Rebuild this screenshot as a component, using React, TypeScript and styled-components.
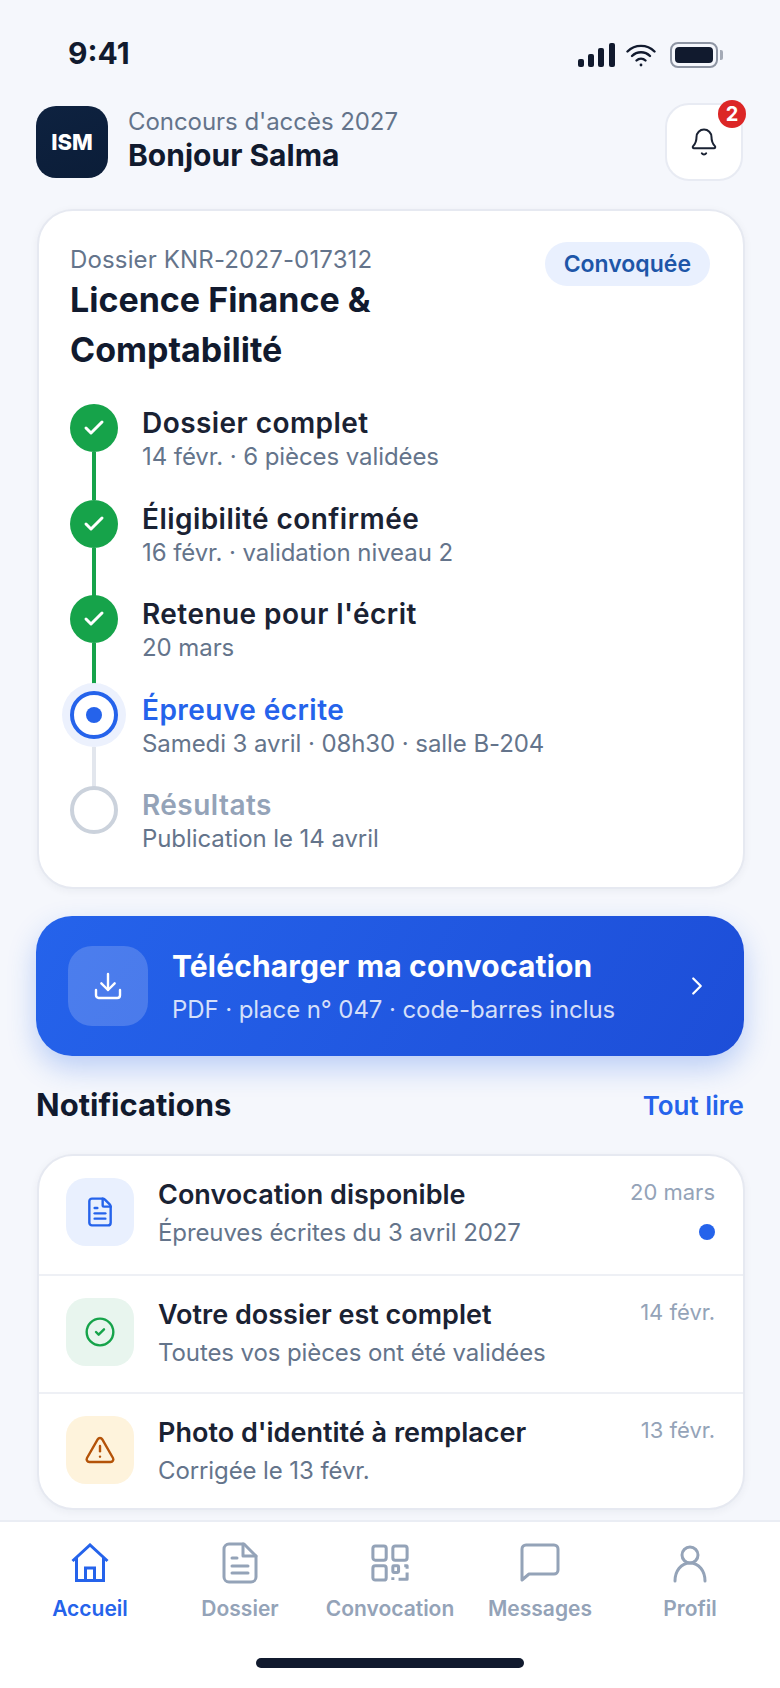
import styled, { createGlobalStyle } from "styled-components"
import { Bell, Check, ChevronRight, CircleCheck, Download, FileText, TriangleAlert } from "lucide-react"

const GlobalStyle = createGlobalStyle`
    * { box-sizing: border-box; }
    html, body { margin: 0; padding: 0; background: #f5f7fc; }
    body { font-family: Inter, "Liberation Sans", sans-serif; color: #111a2e; }
`

type StepState = "done" | "current" | "todo"

interface Step {
    title: string
    detail: string
    state: StepState
}

const steps: Step[] = [
    { title: "Dossier complet", detail: "14 févr. · 6 pièces validées", state: "done" },
    { title: "Éligibilité confirmée", detail: "16 févr. · validation niveau 2", state: "done" },
    { title: "Retenue pour l'écrit", detail: "20 mars", state: "done" },
    { title: "Épreuve écrite", detail: "Samedi 3 avril · 08h30 · salle B-204", state: "current" },
    { title: "Résultats", detail: "Publication le 14 avril", state: "todo" },
]

const tabs = [
    { label: "Accueil", icon: <HomeIcon />, active: true },
    { label: "Dossier", icon: <DocIcon />, active: false },
    { label: "Convocation", icon: <QrIcon />, active: false },
    { label: "Messages", icon: <ChatIcon />, active: false },
    { label: "Profil", icon: <UserIcon />, active: false },
]

function HomeIcon() {
    return (
        <svg width="40" height="40" viewBox="0 0 40 40" fill="none" stroke="currentColor" strokeWidth="3">
            <path d="M2.500 18 20 2l17.500 16" />
            <path d="M6.500 15v22.500h27V15" />
            <path d="M15.500 37.500V25h9v12.500" />
        </svg>
    )
}

function DocIcon() {
    return (
        <svg width="36" height="42" viewBox="0 0 36 42" fill="none" stroke="currentColor" strokeWidth="3" strokeLinecap="round" strokeLinejoin="round">
            <path d="M22 2H7a5 5 0 0 0-5 5v28a5 5 0 0 0 5 5h22a5 5 0 0 0 5-5V14z" />
            <path d="M21 2v12h13" />
            <path d="M10 16h5M10 24h16M10 31h16" />
        </svg>
    )
}

function QrIcon() {
    return (
        <svg width="38" height="38" viewBox="0 0 40 40" fill="none" stroke="currentColor" strokeWidth="3.200" strokeLinejoin="round">
            <rect x="2" y="2" width="14" height="15" rx="2.500" />
            <rect x="23" y="2" width="15" height="15" rx="2.500" />
            <rect x="2" y="23" width="14" height="15" rx="2.500" />
            <rect x="23" y="23" width="6" height="7" rx="1" />
            <path d="M35 23h3v3M38 30v7h-9M23 35v3" />
        </svg>
    )
}

function ChatIcon() {
    return (
        <svg width="40" height="40" viewBox="0 0 40 40" fill="none" stroke="currentColor" strokeWidth="3" strokeLinejoin="round">
            <path d="M2 37V6a4 4 0 0 1 4-4h28a4 4 0 0 1 4 4v21a4 4 0 0 1-4 4H9z" />
        </svg>
    )
}

function UserIcon() {
    return (
        <svg width="34" height="40" viewBox="0 0 34 40" fill="none" stroke="currentColor" strokeWidth="3" strokeLinecap="round">
            <circle cx="17" cy="12" r="8" />
            <path d="M2 38c0-10 6-18 15-18s15 8 15 18" />
        </svg>
    )
}

function StatusIcons() {
    return (
        <StatusRight>
            <svg width="38" height="24" viewBox="0 0 38 24" fill="#111a2e">
                <rect x="0" y="16" width="6" height="8" rx="2" />
                <rect x="10" y="11" width="6" height="13" rx="2" />
                <rect x="20" y="5" width="6" height="19" rx="2" />
                <rect x="31" y="0" width="6" height="24" rx="2" />
            </svg>
            <svg width="30" height="24" viewBox="0 0 30 24" fill="none" stroke="#111a2e" strokeWidth="2.400" strokeLinecap="round">
                <path d="M1.500 8.500C9 1 21 1 28.500 8.500" />
                <path d="M6 13c5-5 13-5 18 0" />
                <path d="M10.500 17.500c2.500-2.500 6.500-2.500 9 0" />
                <circle cx="15" cy="22" r="1.400" fill="#111a2e" stroke="none" />
            </svg>
            <Battery>
                <BatteryFill />
            </Battery>
            <BatteryCap />
        </StatusRight>
    )
}

export default function App() {
    return (
        <>
            <GlobalStyle />
            <Screen>
                <StatusBar>
                    <Time>9:41</Time>
                    <StatusIcons />
                </StatusBar>

                <Content>
                    <Header>
                        <Logo>ISM</Logo>
                        <Greeting>
                            <Exam>Concours d'accès 2027</Exam>
                            <Hello>Bonjour Salma</Hello>
                        </Greeting>
                        <BellButton>
                            <Bell size={30} strokeWidth={1.6} />
                            <Badge>2</Badge>
                        </BellButton>
                    </Header>

                    <DossierCard>
                        <DossierTop>
                            <div>
                                <DossierRef>Dossier KNR-2027-017312</DossierRef>
                                <DossierTitle>Licence Finance &<br />Comptabilité</DossierTitle>
                            </div>
                            <StatusPill>Convoquée</StatusPill>
                        </DossierTop>
                        <Timeline>
                            {steps.map((step, index) => (
                                <StepRow key={step.title}>
                                    <StepMarker $state={step.state}>
                                        {step.state === "done" && <Check size={24} strokeWidth={3} color="#fff" />}
                                        {step.state === "current" && <CurrentDot />}
                                    </StepMarker>
                                    {index < steps.length - 1 && <StepLine $state={step.state} />}
                                    <StepText>
                                        <StepTitle $state={step.state}>{step.title}</StepTitle>
                                        <StepDetail>{step.detail}</StepDetail>
                                    </StepText>
                                </StepRow>
                            ))}
                        </Timeline>
                    </DossierCard>

                    <DownloadButton>
                        <DownloadIcon>
                            <Download size={32} strokeWidth={1.8} />
                        </DownloadIcon>
                        <DownloadText>
                            <DownloadTitle>Télécharger ma convocation</DownloadTitle>
                            <DownloadSub>PDF · place n° 047 · code-barres inclus</DownloadSub>
                        </DownloadText>
                        <ChevronRight size={30} strokeWidth={1.8} />
                    </DownloadButton>

                    <SectionHead>
                        <SectionTitle>Notifications</SectionTitle>
                        <ReadAll>Tout lire</ReadAll>
                    </SectionHead>

                    <NotifCard>
                        <NotifRow $height={120}>
                            <NotifIcon $bg="#e9f0fe" $color="#2563eb"><FileText size={32} strokeWidth={1.8} /></NotifIcon>
                            <NotifText>
                                <NotifTitle>Convocation disponible</NotifTitle>
                                <NotifSub>Épreuves écrites du 3 avril 2027</NotifSub>
                            </NotifText>
                            <NotifMeta>
                                <NotifDate>20 mars</NotifDate>
                                <UnreadDot />
                            </NotifMeta>
                        </NotifRow>
                        <NotifRow $height={118}>
                            <NotifIcon $bg="#e8f5ee" $color="#16a34a"><CircleCheck size={32} strokeWidth={1.8} /></NotifIcon>
                            <NotifText>
                                <NotifTitle>Votre dossier est complet</NotifTitle>
                                <NotifSub>Toutes vos pièces ont été validées</NotifSub>
                            </NotifText>
                            <NotifMeta>
                                <NotifDate>14 févr.</NotifDate>
                            </NotifMeta>
                        </NotifRow>
                        <NotifRow $height={114}>
                            <NotifIcon $bg="#fef3dc" $color="#b45309"><TriangleAlert size={32} strokeWidth={1.8} /></NotifIcon>
                            <NotifText>
                                <NotifTitle>Photo d'identité à remplacer</NotifTitle>
                                <NotifSub>Corrigée le 13 févr.</NotifSub>
                            </NotifText>
                            <NotifMeta>
                                <NotifDate>13 févr.</NotifDate>
                            </NotifMeta>
                        </NotifRow>
                    </NotifCard>
                </Content>

                <TabBar>
                    <Tabs>
                        {tabs.map(tab => (
                            <Tab key={tab.label} $active={tab.active}>
                                <TabIcon>{tab.icon}</TabIcon>
                                <TabLabel>{tab.label}</TabLabel>
                            </Tab>
                        ))}
                    </Tabs>
                    <HomeIndicator />
                </TabBar>
            </Screen>
        </>
    )
}

const Screen = styled.div`
    width: 780px;
    height: 1688px;
    display: flex;
    flex-direction: column;
    overflow: hidden;
    background: #f5f7fc;
`
const StatusBar = styled.div`
    height: 103px;
    flex: none;
    display: flex;
    justify-content: space-between;
    align-items: flex-start;
    padding: 34px 57px 0 68px;
`
const Time = styled.div`
    margin-top: 1px;
    font-size: 30px;
    font-weight: 700;
    line-height: 36px;
    color: #111a2e;
`
const StatusRight = styled.div`
    display: flex;
    align-items: center;
    gap: 10px;
    padding-top: 8px;
`
const Battery = styled.div`
    width: 48px;
    height: 26px;
    margin-left: 4px;
    padding: 3px;
    border: 2px solid #8e95a3;
    border-radius: 8px;
`
const BatteryFill = styled.div`
    width: 100%;
    height: 100%;
    background: #111a2e;
    border-radius: 4px;
`
const BatteryCap = styled.div`
    width: 3px;
    height: 10px;
    margin-left: -8px;
    background: #a4aab6;
    border-radius: 0 2px 2px 0;
`
const Content = styled.div`
    padding: 0 36px;
    display: flex;
    flex-direction: column;
`
const Header = styled.div`
    height: 78px;
    display: flex;
    align-items: center;
`
const Logo = styled.div`
    width: 72px;
    height: 72px;
    border-radius: 20px;
    background: linear-gradient(160deg, #0e2240, #0b1d38);
    color: #fff;
    font-size: 22px;
    font-weight: 800;
    display: flex;
    align-items: center;
    justify-content: center;
`
const Greeting = styled.div`
    margin: 0 0 4px 20px;
    flex: 1;
`
const Exam = styled.div`
    font-size: 24px;
    line-height: 32px;
    letter-spacing: -0.05px;
    color: #64748b;
`
const Hello = styled.div`
    margin-top: -2px;
    font-size: 30px;
    font-weight: 700;
    line-height: 38px;
    color: #111a2e;
`
const BellButton = styled.div`
    position: relative;
    width: 78px;
    height: 78px;
    margin-right: 1px;
    border-radius: 24px;
    background: #fff;
    border: 2px solid #e8ebf3;
    color: #1a2233;
    display: flex;
    align-items: center;
    justify-content: center;
`
const Badge = styled.div`
    position: absolute;
    top: -5px;
    right: -5px;
    width: 28px;
    height: 28px;
    border-radius: 50%;
    background: #dc2626;
    color: #fff;
    font-size: 20px;
    font-weight: 700;
    display: flex;
    align-items: center;
    justify-content: center;
`
const DossierCard = styled.div`
    margin: 28px -1px 0 1px;
    height: 680px;
    background: #fff;
    border: 2px solid #e6e9f1;
    border-radius: 36px;
    padding: 34px 33px 0 31px;
    box-shadow: 0 2px 8px rgba(15, 30, 60, 0.05);
`
const DossierTop = styled.div`
    display: flex;
    justify-content: space-between;
    align-items: flex-start;
`
const DossierRef = styled.div`
    font-size: 24px;
    line-height: 30px;
    letter-spacing: 0.15px;
    color: #64748b;
`
const DossierTitle = styled.div`
    font-size: 34px;
    line-height: 50px;
    font-weight: 700;
    color: #111a2e;
`
const StatusPill = styled.div`
    margin-top: -3px;
    padding: 0 19px;
    height: 44px;
    display: flex;
    align-items: center;
    border-radius: 22px;
    background: #e9f0fe;
    color: #1e56a8;
    font-size: 23px;
    font-weight: 600;
`
const Timeline = styled.div`
    margin-top: 29px;
`
const StepRow = styled.div`
    position: relative;
    height: 95.500px;
    display: flex;
    align-items: flex-start;
`
const StepMarker = styled.div<{ $state: StepState }>`
    width: 48px;
    height: 48px;
    flex: none;
    border-radius: 50%;
    display: flex;
    align-items: center;
    justify-content: center;
    background: ${p => (p.$state === "done" ? "#16a34a" : "#fff")};
    border: ${p => (p.$state === "current" ? "4px solid #2563eb" : p.$state === "todo" ? "4px solid #cbd2dc" : "none")};
    box-shadow: ${p => (p.$state === "current" ? "0 0 0 8px #ecf1fd" : "none")};
`
const CurrentDot = styled.div`
    width: 16px;
    height: 16px;
    border-radius: 50%;
    background: #2563eb;
`
const StepLine = styled.div<{ $state: StepState }>`
    position: absolute;
    left: 22px;
    top: ${p => (p.$state === "current" ? "56px" : "48px")};
    height: ${p => (p.$state === "current" ? "40px" : "48px")};
    width: 4px;
    background: ${p => (p.$state === "done" ? "#16a34a" : "#e2e6ed")};
`
const StepText = styled.div`
    margin-left: 24px;
    margin-top: 2px;
`
const StepTitle = styled.div<{ $state: StepState }>`
    font-size: 28px;
    font-weight: 600;
    line-height: 34px;
    letter-spacing: 0.45px;
    color: ${p => (p.$state === "current" ? "#2563eb" : p.$state === "todo" ? "#94a3b8" : "#1a2233")};
`
const StepDetail = styled.div`
    margin-top: 2px;
    font-size: 24px;
    line-height: 30px;
    letter-spacing: -0.08px;
    color: #64748b;
`
const DownloadButton = styled.div`
    margin-top: 27px;
    height: 140px;
    flex: none;
    border-radius: 36px;
    background: linear-gradient(120deg, #2563eb, #1d4ed8);
    box-shadow: 0 12px 28px rgba(37, 99, 235, 0.28);
    color: #fff;
    display: flex;
    align-items: center;
    padding: 0 32px;
`
const DownloadIcon = styled.div`
    width: 80px;
    height: 80px;
    flex: none;
    border-radius: 24px;
    background: rgba(255, 255, 255, 0.18);
    display: flex;
    align-items: center;
    justify-content: center;
`
const DownloadText = styled.div`
    margin: 0 0 2px 24px;
    flex: 1;
`
const DownloadTitle = styled.div`
    font-size: 30px;
    font-weight: 700;
    line-height: 40px;
    letter-spacing: 0.15px;
`
const DownloadSub = styled.div`
    margin-top: 9px;
    font-size: 24px;
    line-height: 30px;
    letter-spacing: -0.08px;
    color: rgba(255, 255, 255, 0.82);
`
const SectionHead = styled.div`
    margin-top: 27px;
    height: 42px;
    display: flex;
    justify-content: space-between;
    align-items: center;
`
const SectionTitle = styled.div`
    font-size: 31px;
    font-weight: 700;
    color: #111a2e;
`
const ReadAll = styled.div`
    padding-top: 2px;
    font-size: 26px;
    font-weight: 600;
    color: #2563eb;
`
const NotifCard = styled.div`
    margin: 29px -1px 0 1px;
    background: #fff;
    border: 2px solid #e6e9f1;
    border-radius: 36px;
    box-shadow: 0 2px 8px rgba(15, 30, 60, 0.05);
    overflow: hidden;
`
const NotifRow = styled.div<{ $height: number }>`
    height: ${p => p.$height}px;
    display: flex;
    align-items: flex-start;
    padding: 22px 28px 0 27px;
    border-bottom: 2px solid #eef0f5;
    &:last-child { border-bottom: none; }
`
const NotifIcon = styled.div<{ $bg: string; $color: string }>`
    width: 68px;
    height: 68px;
    flex: none;
    border-radius: 20px;
    background: ${p => p.$bg};
    color: ${p => p.$color};
    display: flex;
    align-items: center;
    justify-content: center;
`
const NotifText = styled.div`
    margin-left: 24px;
    flex: 1;
`
const NotifTitle = styled.div`
    font-size: 27px;
    font-weight: 600;
    line-height: 34px;
    color: #1a2233;
`
const NotifSub = styled.div`
    margin-top: 5px;
    font-size: 24px;
    line-height: 32px;
    letter-spacing: -0.1px;
    color: #64748b;
`
const NotifMeta = styled.div`
    margin-top: -1px;
    display: flex;
    flex-direction: column;
    align-items: flex-end;
`
const NotifDate = styled.div`
    font-size: 22px;
    line-height: 30px;
    color: #94a3b8;
`
const UnreadDot = styled.div`
    width: 16px;
    height: 16px;
    margin-top: 17px;
    border-radius: 50%;
    background: #2563eb;
`
const TabBar = styled.div`
    margin-top: auto;
    height: 168px;
    flex: none;
    background: #fff;
    border-top: 2px solid #eaedf4;
    display: flex;
    flex-direction: column;
    align-items: center;
`
const Tabs = styled.div`
    width: 100%;
    padding: 0 15px;
    display: grid;
    grid-template-columns: repeat(5, 1fr);
`
const Tab = styled.div<{ $active: boolean }>`
    padding-top: 20px;
    display: flex;
    flex-direction: column;
    align-items: center;
    color: ${p => (p.$active ? "#2563eb" : "#94a3b8")};
`
const TabIcon = styled.div`
    height: 42px;
    display: flex;
    align-items: center;
    justify-content: center;
`
const TabLabel = styled.div`
    margin-top: 11px;
    font-size: 21px;
    font-weight: 600;
    line-height: 28px;
`
const HomeIndicator = styled.div`
    margin-top: 35px;
    width: 268px;
    height: 10px;
    border-radius: 5px;
    background: #111a2e;
`
